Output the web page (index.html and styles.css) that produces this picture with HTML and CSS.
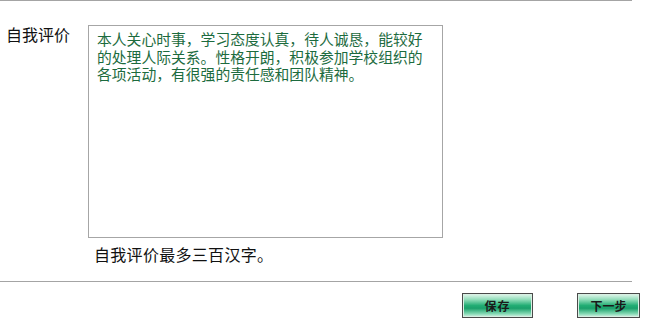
FILE: index.html
```html
<!DOCTYPE html>
<html lang="zh-CN">
<head>
<meta charset="utf-8">
<title>自我评价</title>
<link rel="stylesheet" href="styles.css">
</head>
<body>
<div class="page">
  <div class="rule rule-top"></div>
  <div class="row">
    <div class="label">自我评价</div>
    <div class="field">
      <textarea class="box">本人关心时事，学习态度认真，待人诚恳，能较好的处理人际关系。性格开朗，积极参加学校组织的各项活动，有很强的责任感和团队精神。</textarea>
      <div class="hint">自我评价最多三百汉字。</div>
    </div>
  </div>
  <div class="rule rule-bottom"></div>
  <div class="actions">
    <button class="btn btn-save" type="button">保存</button>
    <button class="btn btn-next" type="button">下一步</button>
  </div>
</div>
</body>
</html>
```
FILE: styles.css
```css
html, body {
  margin: 0;
  padding: 0;
  background: #ffffff;
}
body {
  font-family: "Noto Sans CJK SC", "Noto Sans", sans-serif;
  color: #000000;
}
.page {
  width: 648px;
}
.rule {
  width: 632px;
  height: 1px;
  background: #a4a4a4;
}
.row {
  display: flex;
  padding-top: 24px;
}
.label {
  width: 82px;
  padding-left: 6px;
  font-size: 16px;
  line-height: 19px;
  color: #111111;
}
.field {
  display: flex;
  flex-direction: column;
}
.box {
  box-sizing: border-box;
  width: 355px;
  height: 213px;
  margin: 0;
  padding: 4px 10px 2px 8px;
  border: 1px solid #a6a6a6;
  resize: none;
  overflow: hidden;
  font-family: "Noto Sans CJK SC", "Noto Sans", sans-serif;
  font-size: 14.8px;
  line-height: 17.5px;
  color: #1c6b3e;
  background: #ffffff;
  outline: none;
}
.hint {
  margin: 7px 0 17px 6px;
  font-size: 16px;
  line-height: 19px;
  letter-spacing: 0.3px;
  color: #111111;
}
.actions {
  display: flex;
  gap: 44px;
  padding-left: 462px;
  padding-top: 11px;
}
.btn {
  box-sizing: border-box;
  height: 25px;
  margin: 0;
  padding: 0;
  border: 1px solid #4a4a4a;
  box-shadow: inset 0 0 0 1px #d8efe3;
  background: linear-gradient(to bottom, #e4f7ed 0%, #8fdcb8 25%, #22ad74 50%, #1aa06a 62%, #7fd6b0 85%, #d8f3e6 100%);
  font-family: "Noto Sans CJK SC", "Noto Sans", sans-serif;
  font-size: 12px;
  font-weight: bold;
  color: #1a1a1a;
  line-height: 23px;
  text-align: center;
  cursor: pointer;
}
.btn-save {
  width: 71px;
  letter-spacing: 1px;
}
.btn-next {
  width: 63px;
}
```
